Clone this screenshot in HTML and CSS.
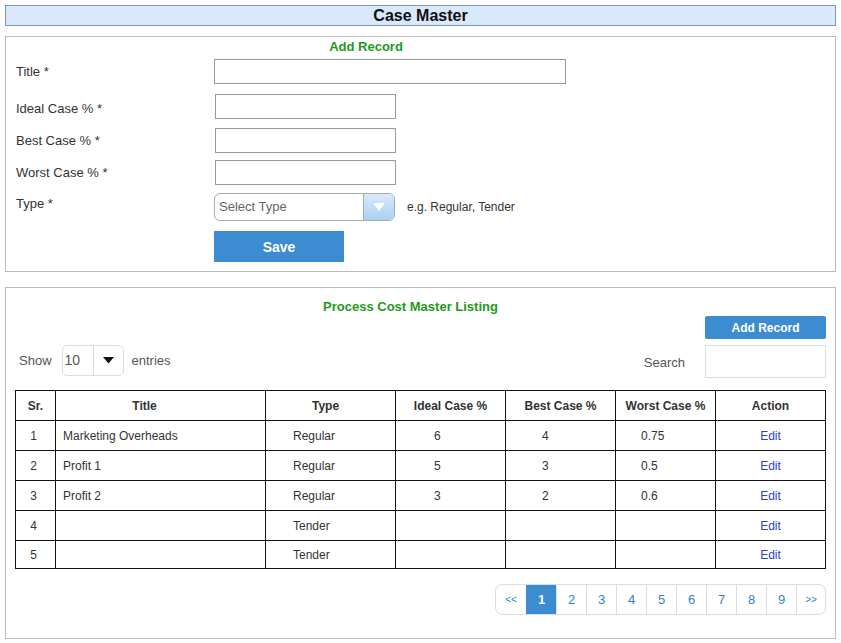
FILE: index.html
```html
<!DOCTYPE html>
<html>
<head>
<meta charset="utf-8">
<title>Case Master</title>
<link rel="stylesheet" href="styles.css">
</head>
<body>
<div class="page-title">Case Master</div>

<div class="panel panel-form">
  <div class="section-title form-title">Add Record</div>
  <div class="form-row row-title">
    <label class="form-label">Title *</label>
    <input class="text-input input-wide" type="text">
  </div>
  <div class="form-row row-ideal">
    <label class="form-label label-low">Ideal Case % *</label>
    <input class="text-input input-short" type="text">
  </div>
  <div class="form-row row-best">
    <label class="form-label">Best Case % *</label>
    <input class="text-input input-short" type="text">
  </div>
  <div class="form-row row-worst">
    <label class="form-label">Worst Case % *</label>
    <input class="text-input input-short" type="text">
  </div>
  <div class="form-row row-type">
    <label class="form-label label-high">Type *</label>
    <div class="type-select">
      <span class="type-value">Select Type</span>
      <span class="type-btn"><svg width="14" height="10" viewBox="0 0 14 10"><path d="M1 1 L13 1 L7 9 Z" fill="#ffffff"/></svg></span>
    </div>
    <span class="hint">e.g. Regular, Tender</span>
  </div>
  <div class="form-row row-save">
    <span class="form-label"></span>
    <button class="btn btn-save" type="button">Save</button>
  </div>
</div>

<div class="panel panel-list">
  <div class="section-title list-title">Process Cost Master Listing</div>
  <div class="toolbar-top">
    <button class="btn btn-add" type="button">Add Record</button>
  </div>
  <div class="toolbar">
    <div class="length">
      <span>Show</span>
      <div class="length-select">
        <span class="length-value">10</span>
        <span class="length-btn"><svg width="11" height="7" viewBox="0 0 11 7"><path d="M0 0 L11 0 L5.5 6.5 Z" fill="#111"/></svg></span>
      </div>
      <span>entries</span>
    </div>
    <div class="search">
      <span class="search-label">Search</span>
      <input class="search-input" type="text">
    </div>
  </div>

  <table class="grid">
    <thead>
      <tr>
        <th class="c-sr">Sr.</th>
        <th class="c-title h-title">Title</th>
        <th class="c-type h-type">Type</th>
        <th class="c-ideal">Ideal Case %</th>
        <th class="c-best">Best Case %</th>
        <th class="c-worst">Worst Case %</th>
        <th class="c-action">Action</th>
      </tr>
    </thead>
    <tbody>
      <tr>
        <td class="d-sr">1</td><td class="d-title">Marketing Overheads</td><td class="d-type">Regular</td>
        <td class="d-ideal">6</td><td class="d-best">4</td><td class="d-worst">0.75</td><td class="d-action"><a href="#">Edit</a></td>
      </tr>
      <tr>
        <td class="d-sr">2</td><td class="d-title">Profit 1</td><td class="d-type">Regular</td>
        <td class="d-ideal">5</td><td class="d-best">3</td><td class="d-worst">0.5</td><td class="d-action"><a href="#">Edit</a></td>
      </tr>
      <tr>
        <td class="d-sr">3</td><td class="d-title">Profit 2</td><td class="d-type">Regular</td>
        <td class="d-ideal">3</td><td class="d-best">2</td><td class="d-worst">0.6</td><td class="d-action"><a href="#">Edit</a></td>
      </tr>
      <tr>
        <td class="d-sr">4</td><td class="d-title"></td><td class="d-type">Tender</td>
        <td class="d-ideal"></td><td class="d-best"></td><td class="d-worst"></td><td class="d-action"><a href="#">Edit</a></td>
      </tr>
      <tr class="last-row">
        <td class="d-sr">5</td><td class="d-title"></td><td class="d-type">Tender</td>
        <td class="d-ideal"></td><td class="d-best"></td><td class="d-worst"></td><td class="d-action"><a href="#">Edit</a></td>
      </tr>
    </tbody>
  </table>

  <div class="pager-wrap">
    <div class="pager">
      <a class="pg pg-arrow" href="#">&lt;&lt;</a>
      <a class="pg active" href="#">1</a>
      <a class="pg" href="#">2</a>
      <a class="pg" href="#">3</a>
      <a class="pg" href="#">4</a>
      <a class="pg" href="#">5</a>
      <a class="pg" href="#">6</a>
      <a class="pg" href="#">7</a>
      <a class="pg" href="#">8</a>
      <a class="pg" href="#">9</a>
      <a class="pg pg-arrow pg-last" href="#">&gt;&gt;</a>
    </div>
  </div>
</div>
</body>
</html>
```

FILE: styles.css
```css
* { box-sizing: border-box; }

body {
  margin: 5px;
  font-family: "Liberation Sans", Arial, sans-serif;
  color: #333;
  background: #fff;
}

.page-title {
  height: 21px;
  line-height: 19px;
  background: #d9e8fa;
  border: 1px solid #8197b6;
  text-align: center;
  font-weight: bold;
  font-size: 16px;
  color: #111;
}

.panel {
  border: 1px solid #bbb;
  background: #fff;
}

.panel-form {
  margin-top: 10px;
  height: 236px;
  padding: 2px 9px 0 10px;
}

.panel-list {
  margin-top: 15px;
  height: 352px;
  padding: 11px 9px 0 9px;
}

.section-title {
  font-size: 13px;
  font-weight: bold;
  line-height: 15px;
  color: #1e9a1e;
  text-align: center;
}

.form-title { padding-right: 110px; }
.list-title { padding-right: 20px; }

.form-row {
  display: flex;
  align-items: center;
}

.row-title { margin-top: 5px; }
.row-ideal { margin-top: 10px; }
.row-best { margin-top: 9px; }
.row-worst { margin-top: 7px; }
.row-type { margin-top: 8px; align-items: flex-start; }
.row-save { margin-top: 10px; }

.form-label {
  width: 198px;
  flex: none;
  font-size: 13px;
  line-height: 15px;
  color: #333;
}

.label-low { padding-top: 4px; }
.label-high { padding-top: 3px; }

.text-input {
  height: 25px;
  border: 1px solid #999;
  background: #fff;
  font: inherit;
  padding: 0 4px;
  margin: 0;
}

.input-wide { width: 352px; }
.input-short { width: 181px; margin-left: 1px; }

.type-select {
  width: 181px;
  height: 28px;
  border: 1px solid #aaa;
  border-radius: 6px;
  display: flex;
  overflow: hidden;
}

.type-value {
  flex: 1;
  font-size: 13px;
  line-height: 26px;
  color: #666;
  padding-left: 4px;
}

.type-btn {
  width: 31px;
  border-left: 1px solid #aaa;
  background: linear-gradient(to bottom, #d9eafb, #a9d0f4);
  display: flex;
  align-items: center;
  justify-content: center;
}

.hint {
  margin-left: 12px;
  font-size: 12px;
  line-height: 28px;
  color: #333;
}

.btn {
  border: none;
  background: #3d8bd0;
  color: #fff;
  font-family: inherit;
  font-weight: bold;
  cursor: pointer;
  padding: 0;
  margin: 0;
}

.btn-save {
  width: 130px;
  height: 31px;
  font-size: 14px;
}

.toolbar-top {
  display: flex;
  justify-content: flex-end;
  margin-top: 2px;
}

.btn-add {
  width: 121px;
  height: 23px;
  font-size: 12px;
  border-radius: 2px;
}

.toolbar {
  display: flex;
  justify-content: space-between;
  align-items: flex-start;
  margin-top: 6px;
  padding-left: 4px;
}

.length {
  display: flex;
  align-items: center;
  gap: 8px;
  font-size: 13px;
  color: #555;
  height: 31px;
}

.length-select {
  display: flex;
  width: 62px;
  height: 31px;
  border: 1px solid #ddd;
  border-radius: 5px;
  margin-left: 2px;
}

.length-value {
  width: 30px;
  font-size: 14px;
  line-height: 29px;
  padding-left: 2px;
  color: #555;
}

.length-btn {
  flex: 1;
  border-left: 1px solid #ddd;
  display: flex;
  align-items: center;
  justify-content: center;
}

.search {
  display: flex;
  align-items: center;
  height: 33px;
}

.search-label {
  font-size: 13px;
  color: #555;
  margin-right: 20px;
  padding-top: 2px;
}

.search-input {
  width: 121px;
  height: 33px;
  border: 1px solid #ddd;
  margin: 0;
  padding: 0 4px;
}

.grid {
  margin-top: 12px;
  width: 810px;
  border-collapse: collapse;
  font-size: 12px;
  color: #333;
  table-layout: fixed;
}

.grid th,
.grid td {
  border: 1px solid #111;
  height: 30px;
  padding: 0;
  vertical-align: middle;
}

.grid th {
  font-weight: bold;
  text-align: center;
}

.grid .last-row td { height: 28px; }

.c-sr { width: 40px; }
.c-title { width: 210px; }
.c-type { width: 130px; }
.c-ideal { width: 110px; }
.c-best { width: 110px; }
.c-worst { width: 100px; }
.c-action { width: 110px; }

.h-title { padding-right: 32px !important; }
.h-type { padding-right: 10px !important; }

.d-sr { text-align: center; padding-right: 4px !important; }
.d-title { padding-left: 7px !important; }
.d-type { padding-left: 27px !important; }
.d-ideal { padding-left: 38px !important; }
.d-best { padding-left: 36px !important; }
.d-worst { padding-left: 25px !important; }
.d-action { text-align: center; }

.d-action a {
  color: #2e3ec8;
  text-decoration: none;
}

.pager-wrap {
  display: flex;
  justify-content: flex-end;
  margin-top: 15px;
}

.pager {
  display: flex;
  border: 1px solid #ddd;
  border-radius: 7px;
  overflow: hidden;
  height: 31px;
}

.pg {
  width: 30px;
  height: 29px;
  line-height: 29px;
  text-align: center;
  font-size: 13px;
  color: #3b7fc0;
  text-decoration: none;
  border-left: 1px solid #ddd;
}

.pg:first-child { border-left: none; }
.pg-last { width: 29px; }

.pg-arrow { font-size: 10px; }

.pg.active {
  background: #3d8bd0;
  color: #fff;
  font-weight: bold;
  border-left-color: #3d8bd0;
}
```
